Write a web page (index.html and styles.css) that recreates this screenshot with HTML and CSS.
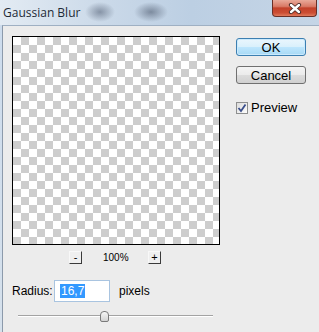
FILE: index.html
```html
<!DOCTYPE html>
<html>
<head>
<meta charset="UTF-8">
<title>Gaussian Blur</title>
<link rel="stylesheet" href="styles.css">
</head>
<body>
<div class="window">
	<div class="titlebar">
		<span class="title">Gaussian Blur</span>
		<div class="close">
			<svg width="14" height="11" viewBox="0 0 14 11">
				<path d="M3 2 L11 9 M11 2 L3 9" stroke="#4a2a26" stroke-width="4.2" stroke-linecap="round"/>
				<path d="M3 2 L11 9 M11 2 L3 9" stroke="#fff" stroke-width="2.4" stroke-linecap="round"/>
			</svg>
		</div>
	</div>
	<div class="frame">
		<div class="dialog">
			<div class="main">
				<div class="preview"></div>
				<div class="zoom">
					<span class="zbtn">-</span>
					<span class="zval">100%</span>
					<span class="zbtn">+</span>
				</div>
				<div class="radius">
					<span class="label">Radius:</span>
					<span class="field"><span class="sel">16,7</span></span>
					<span class="unit">pixels</span>
				</div>
				<div class="slider"><span class="thumb"></span></div>
			</div>
			<div class="side">
				<div class="btn btn-default">OK</div>
				<div class="btn">Cancel</div>
				<div class="check">
					<span class="box">
						<svg width="10" height="10" viewBox="0 0 10 10">
							<path d="M1.5 5 L4 8 L8.5 1.5" fill="none" stroke="#3b4f8c" stroke-width="1.8"/>
						</svg>
					</span>
					<span>Preview</span>
				</div>
			</div>
		</div>
	</div>
</div>
</body>
</html>
```

FILE: styles.css
```css
html, body{
	margin:0;
	padding:0;
}
body{
	width:319px;
	height:332px;
	overflow:hidden;
	font-family:"Liberation Sans", Arial, sans-serif;
	font-size:12px;
	color:#000;
	background:#dbe5ef;
}
.window{
	width:319px;
	height:332px;
	display:flex;
	flex-direction:column;
}
.titlebar{
	height:25px;
	flex:none;
	display:flex;
	justify-content:space-between;
	align-items:flex-start;
	background:
		radial-gradient(ellipse 15px 10px at 100px 12px, rgba(105,118,138,0.7), rgba(105,118,138,0) 100%),
		radial-gradient(ellipse 17px 10px at 151px 12px, rgba(95,108,128,0.7), rgba(95,108,128,0) 100%),
		linear-gradient(90deg, #e3ebf3 0%, #c9d8e8 35%, #bccfe3 60%, #c5d5e6 100%);
}
.title{
	font-family:"Open Sans", "Noto Sans", sans-serif;
	font-size:12px;
	color:#1e2a36;
	padding:4px 0 0 3px;
}
.close{
	width:45px;
	height:17px;
	margin-right:2px;
	box-sizing:border-box;
	border:1px solid #6a2f26;
	border-top:none;
	border-radius:0 0 4px 4px;
	background:linear-gradient(#e9a999 0%, #d97a66 40%, #c2412a 50%, #cc4d33 80%, #e07a5c 100%);
	display:flex;
	align-items:center;
	justify-content:center;
}
.frame{
	flex:1;
	padding-left:2px;
	display:flex;
	background:linear-gradient(#cddced, #d6e1ec);
}
.dialog{
	flex:1;
	display:flex;
	background:#ececec;
	border-left:1px solid #8c9aab;
	border-top:1px solid #9fb0c3;
	padding:10px 0 0 9px;
}
.main{
	width:208px;
	display:flex;
	flex-direction:column;
}
.preview{
	width:208px;
	height:209px;
	box-sizing:border-box;
	border:1px solid #000;
	background-color:#fff;
	background-image:
		linear-gradient(45deg, #cdcdcd 25%, transparent 25%, transparent 75%, #cdcdcd 75%),
		linear-gradient(45deg, #cdcdcd 25%, transparent 25%, transparent 75%, #cdcdcd 75%);
	background-size:16px 16px;
	background-position:0 0, 8px 8px;
}
.zoom{
	margin-top:6px;
	display:flex;
	justify-content:center;
	align-items:center;
	gap:21px;
	padding-right:2px;
}
.zbtn{
	width:13px;
	height:13px;
	box-sizing:border-box;
	border:1px solid #f8f8f8;
	border-right-color:#3a3a3a;
	border-bottom-color:#3a3a3a;
	background:#efefef;
	font-size:11px;
	line-height:10px;
	text-align:center;
}
.zval{
	font-size:10px;
	width:24px;
	text-align:center;
}
.radius{
	margin-top:16px;
	display:flex;
	align-items:center;
}
.label{
	width:42px;
}
.field{
	width:56px;
	height:22px;
	box-sizing:border-box;
	border:1px solid #a9c4e0;
	background:#fff;
	display:flex;
	align-items:center;
	padding-left:5px;
}
.sel{
	background:#3399ff;
	color:#fff;
	padding:0 1px;
	line-height:14px;
}
.unit{
	margin-left:9px;
}
.slider{
	margin:9px 0 0 6px;
	width:195px;
	height:11px;
	display:flex;
	background:
		linear-gradient(#a3a3a3, #a3a3a3) no-repeat 0 4px / 100% 1px,
		linear-gradient(#ffffff, #ffffff) no-repeat 0 5px / 100% 1px;
}
.thumb{
	margin-left:82px;
	width:9px;
	height:11px;
	box-sizing:border-box;
	border:1px solid #7a7a7a;
	border-radius:4px 4px 2px 2px;
	background:linear-gradient(#f7f7f7, #d2d2d2);
}
.side{
	margin-left:16px;
	padding-top:2px;
	display:flex;
	flex-direction:column;
	align-items:flex-start;
}
.btn{
	width:70px;
	height:18px;
	box-sizing:border-box;
	border:1px solid #707070;
	border-radius:3px;
	background:linear-gradient(#f4f4f4 0%, #ebebeb 50%, #dcdcdc 51%, #d0d0d0 100%);
	display:flex;
	align-items:center;
	justify-content:center;
	font-size:13px;
}
.btn + .btn{
	margin-top:10px;
}
.btn-default{
	border-color:#3c7fb1;
	background:linear-gradient(#eaf6fd 0%, #d9f0fc 50%, #bee6fd 51%, #a7d9f5 100%);
	box-shadow:inset 0 0 0 1px #cbeafd;
}
.check{
	margin-top:16px;
	display:flex;
	align-items:center;
	font-size:13px;
}
.box{
	width:12px;
	height:12px;
	box-sizing:border-box;
	border:1px solid #8e8f8f;
	background:linear-gradient(135deg, #dcdcdc, #fdfdfd);
	display:flex;
	align-items:center;
	justify-content:center;
	margin-right:3px;
}
```
